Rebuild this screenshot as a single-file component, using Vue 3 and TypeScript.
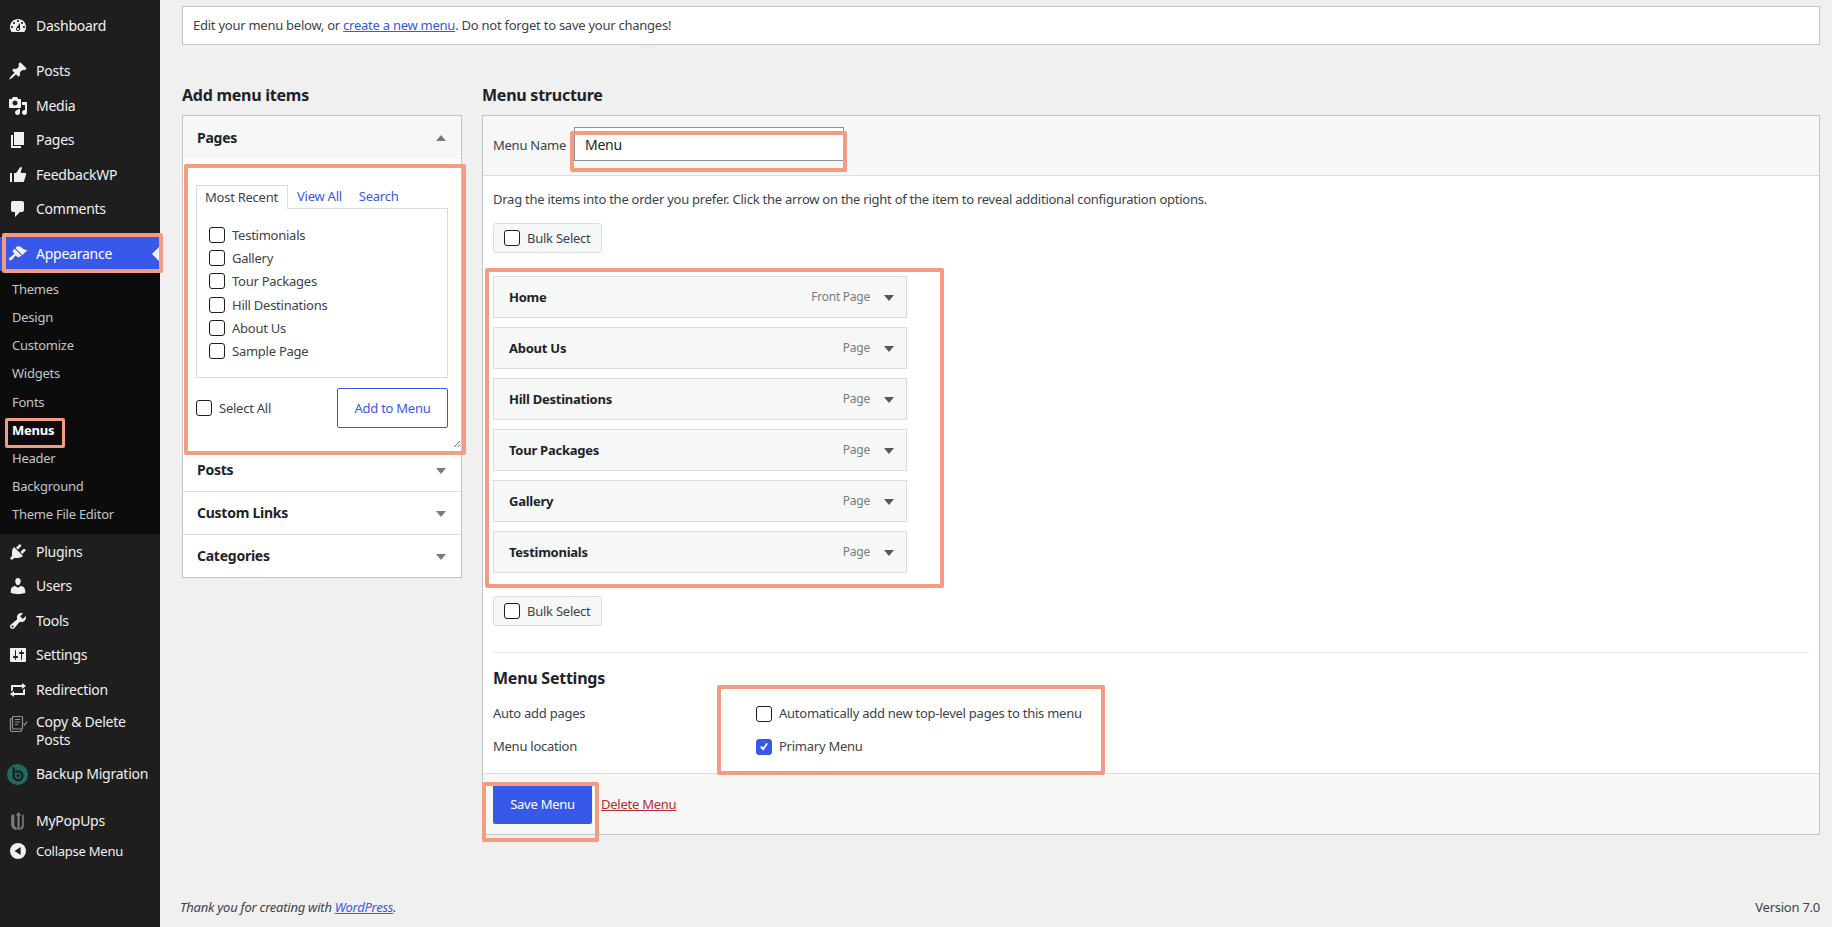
<script setup lang="ts">
interface NavItem { label: string; d?: string; custom?: string; cls?: string }
const top: NavItem[] = [
  { label: 'Posts', d: 'M10.44 3.02l1.82-1.82 6.36 6.35-1.83 1.82c-1.05-.68-2.48-.57-3.41.36l-.75.75c-.92.93-1.04 2.35-.35 3.41l-1.83 1.82-2.41-2.41-2.8 2.79c-.42.42-3.38 2.71-3.8 2.29s1.86-3.39 2.28-3.81l2.79-2.79L4.1 9.36l1.83-1.82c1.05.69 2.48.57 3.4-.36l.75-.75c.93-.92 1.05-2.35.36-3.41z' },
  { label: 'Media', d: 'M13 11V4c0-.55-.45-1-1-1h-1.67L9 1H5L3.67 3H2c-.55 0-1 .45-1 1v7c0 .55.45 1 1 1h10c.55 0 1-.45 1-1zM7 4.5c1.38 0 2.5 1.12 2.5 2.5S8.38 9.5 7 9.5 4.5 8.38 4.5 7 5.62 4.5 7 4.5zM14 6h5v10.5c0 1.38-1.12 2.5-2.5 2.5S14 17.88 14 16.5s1.12-2.5 2.5-2.5c.17 0 .34.02.5.05V9h-3V6zm-4 8.05V13h2v3.5c0 1.38-1.12 2.5-2.5 2.5S7 17.88 7 16.5 8.12 14 9.5 14c.17 0 .34.02.5.05z' },
  { label: 'Pages', d: 'M6 15V2h10v13H6zm-1 1h8v2H3V5h2v11z' },
  { label: 'FeedbackWP', d: 'M12.72 2c.15-.02.26.02.41.07.56.19.83.79.66 1.35-.17.55-1 3.04-1 3.58 0 .53.75 1 1.35 1h3c.6 0 1 .4 1 1s-2 7-2 7c-.17.39-.55 1-1 1H6V8h2.14c.41-.41 3.3-4.71 3.58-5.27.21-.41.6-.68 1-.73zM2 8h2v9H2V8z' },
  { label: 'Comments', d: 'M5 2h9c1.1 0 2 .9 2 2v7c0 1.1-.9 2-2 2h-2l-5 5v-5H5c-1.1 0-2-.9-2-2V4c0-1.1.9-2 2-2z' },
]
const subs = ['Themes', 'Design', 'Customize', 'Widgets', 'Fonts', 'Menus', 'Header', 'Background', 'Theme File Editor']
const lower: NavItem[] = [
  { label: 'Plugins', d: 'M13.11 4.36L9.87 7.6 8 5.73l3.24-3.24c.35-.34 1.05-.2 1.56.32.52.51.66 1.21.31 1.55zm-8 1.77l.91-1.12 9.01 9.01-1.19.84c-.71.71-2.63 1.16-3.82 1.16H6.14L4.9 17.26c-.59.59-1.54.59-2.12 0-.59-.58-.59-1.53 0-2.12l1.24-1.24v-3.88c0-1.13.4-3.19 1.09-3.89zm7.26 3.97l3.24-3.24c.34-.35 1.04-.21 1.55.31.52.51.66 1.21.31 1.55l-3.24 3.25z' },
  { label: 'Users', d: 'M10 9.25c-2.27 0-2.73-3.44-2.73-3.44C7 4.02 7.82 2 9.97 2c2.16 0 2.98 2.02 2.71 3.81 0 0-.41 3.44-2.68 3.44zm0 2.57L12.72 10c2.39 0 4.52 2.33 4.52 4.53v2.49s-3.65 1.13-7.24 1.13c-3.65 0-7.24-1.13-7.24-1.13v-2.49c0-2.25 1.94-4.48 4.47-4.48z' },
  { label: 'Tools', d: 'M16.68 9.77c-1.34 1.34-3.3 1.67-4.95.99l-5.41 6.52c-.99.99-2.59.99-3.58 0s-.99-2.59 0-3.57l6.52-5.42c-.68-1.65-.35-3.61.99-4.95 1.28-1.28 3.12-1.62 4.72-1.06l-2.89 2.89 2.82 2.82 2.86-2.87c.53 1.58.18 3.39-1.08 4.67zM3.81 16.21c.4.39 1.04.39 1.43 0 .4-.4.4-1.04 0-1.43-.39-.4-1.03-.4-1.43 0-.39.39-.39 1.03 0 1.43z' },
  { label: 'Settings', d: 'M18 16V4c0-.55-.45-1-1-1H3c-.55 0-1 .45-1 1v12c0 .55.45 1 1 1h14c.55 0 1-.45 1-1zM8 11h1c.55 0 1 .45 1 1s-.45 1-1 1H8v1.5c0 .28-.22.5-.5.5s-.5-.22-.5-.5V13H6c-.55 0-1-.45-1-1s.45-1 1-1h1V5.5c0-.28.22-.5.5-.5s.5.22.5.5V11zm5-2h-1c-.55 0-1-.45-1-1s.45-1 1-1h1V5.5c0-.28.22-.5.5-.5s.5.22.5.5V7h1c.55 0 1 .45 1 1s-.45 1-1 1h-1v5.5c0 .28-.22.5-.5.5s-.5-.22-.5-.5V9z' },
  { label: 'Redirection', d: 'M5 7v3l-2 1.5V5h11V3l4 3.01L14 9V7H5zm10 6v-3l2-1.5V15H6v2l-4-3.01L6 11v2h9z' },
]
const dash = 'M3.76 16h12.48c1.1-1.37 1.76-3.11 1.76-5 0-4.42-3.58-8-8-8s-8 3.58-8 8c0 1.89.66 3.63 1.76 5zM10 4c.55 0 1 .45 1 1s-.45 1-1 1-1-.45-1-1 .45-1 1-1zM6 6c.55 0 1 .45 1 1s-.45 1-1 1-1-.45-1-1 .45-1 1-1zm8 0c.55 0 1 .45 1 1s-.45 1-1 1-1-.45-1-1 .45-1 1-1zm-5.37 5.55L12 7v6c0 1.1-.9 2-2 2s-2-.9-2-2c0-.57.24-1.08.63-1.45zM4 10c.55 0 1 .45 1 1s-.45 1-1 1-1-.45-1-1 .45-1 1-1zm12 0c.55 0 1 .45 1 1s-.45 1-1 1-1-.45-1-1 .45-1 1-1zm-5 3c0-.55-.45-1-1-1s-1 .45-1 1 .45 1 1 1 1-.45 1-1z'
const brush = 'M14.48 11.06L7.41 3.99l1.5-1.5c.5-.56 2.3-.47 3.51.32 1.21.8 1.43 1.28 2.91 2.1 1.18.64 2.45 1.26 4.45.85zm-.71.71L6.7 4.7 4.93 6.47c-.39.39-.39 1.02 0 1.41l1.06 1.06c.39.39.39 1.03 0 1.42-.6.6-1.43 1.11-2.21 1.69-.35.26-.7.53-1.01.84C1.43 13.23.4 14.84 1.33 15.9c.87 1.11 2.24.08 3.08-.7.3-.31.57-.66.84-1.01.56-.78 1.09-1.61 1.69-2.21.39-.39 1.03-.39 1.42 0l1.06 1.06c.39.39 1.02.39 1.41 0z'
const recent = ['Testimonials', 'Gallery', 'Tour Packages', 'Hill Destinations', 'About Us', 'Sample Page']
const closed = ['Posts', 'Custom Links', 'Categories']
const items = [
  { t: 'Home', k: 'Front Page' }, { t: 'About Us', k: 'Page' }, { t: 'Hill Destinations', k: 'Page' },
  { t: 'Tour Packages', k: 'Page' }, { t: 'Gallery', k: 'Page' }, { t: 'Testimonials', k: 'Page' },
]
</script>

<template>
  <div class="page">
    <aside class="side">
      <div class="nav first"><svg class="ico" viewBox="0 0 20 20"><path :d="dash" /></svg><span>Dashboard</span></div>
      <div class="nav-group">
        <div v-for="n in top" :key="n.label" class="nav"><svg class="ico" viewBox="0 0 20 20"><path :d="n.d" /></svg><span>{{ n.label }}</span></div>
      </div>
      <div class="nav current"><svg class="ico" viewBox="0 0 20 20"><path :d="brush" /></svg><span>Appearance</span><i class="notch"></i></div>
      <div class="subs">
        <div v-for="s in subs" :key="s" class="sub" :class="{ on: s === 'Menus' }">{{ s }}</div>
      </div>
      <div class="nav-group plain">
        <div v-for="n in lower" :key="n.label" class="nav"><svg class="ico" viewBox="0 0 20 20"><path :d="n.d" /></svg><span>{{ n.label }}</span></div>
        <div class="nav tall">
          <svg class="ico" viewBox="0 0 20 20" fill="none"><g class="dim" fill="none" stroke="#8f9193" stroke-width="1.2"><path d="M5 3.5h8.5a1 1 0 0 1 1 1V15a1 1 0 0 1-1 1H5.5a1 1 0 0 1-1-1V4z" /><path d="M4.5 5.5H3.2a.8.8 0 0 0-.8.8v10.5c0 1 .8 1.7 1.7 1.7h8.4a1 1 0 0 0 1-1V16" /><path d="M7 6.5h5M7 9h5M7 11.5h3" /><path d="M15.5 10.5l1.2 1.5 2.3-3.5" /></g></svg>
          <span>Copy &amp; Delete Posts</span>
        </div>
        <div class="nav backup">
          <svg class="ico big" viewBox="0 0 20 20"><circle cx="10" cy="10" r="10" fill="#1f6b62" /><path d="M6.3 3.2v8a4.2 4.2 0 1 0 1.6-3.3" fill="none" stroke="#1e1e1e" stroke-width="2.2" /><circle cx="10.5" cy="11.2" r="1.6" fill="#1e1e1e" /></svg>
          <span>Backup Migration</span>
        </div>
        <div class="nav popups">
          <svg class="ico big" viewBox="0 0 20 20"><path d="M4 3.5h3v9.5c0 1.6 1 2.3 2.2 2.5V18C6 17.7 4 15.9 4 13zM12.8 18c2.4-.5 3.2-2.4 3.2-5V3.5h-1.6V13c0 1.6-.6 2.3-1.6 2.5z" fill="#7c7c7c" /><path d="M10 18V4.2H8.4L11 1l2.6 3.2H12V18z" fill="#7c7c7c" /></svg>
          <span>MyPopUps</span>
        </div>
        <div class="nav collapse">
          <svg class="ico" viewBox="0 0 20 20"><circle cx="10" cy="10" r="8" fill="#f0f0f1" /><path d="M12.6 6v8L6.6 10z" fill="#1e1e1e" /></svg>
          <span>Collapse Menu</span>
        </div>
      </div>
    </aside>

    <main class="main">
      <div class="notice">Edit your menu below, or <a>create a new menu</a>. Do not forget to save your changes!</div>
      <div class="cols">
        <section class="left">
          <h2>Add menu items</h2>
          <div class="acc">
            <div class="acc-head open"><b>Pages</b><i class="tri up"></i></div>
            <div class="acc-body">
              <div class="tabs"><span class="tab active">Most Recent</span><a class="tab">View All</a><a class="tab">Search</a></div>
              <div class="list">
                <label v-for="r in recent" :key="r" class="row"><span class="cb"></span>{{ r }}</label>
              </div>
              <div class="actions">
                <label class="row"><span class="cb"></span>Select All</label>
                <button class="add" type="button">Add to Menu</button>
              </div>
              <svg class="grip" viewBox="0 0 8 8"><path d="M1 7l6-6M4.5 7L7 4.5" stroke="#6f6f6f" fill="none" /></svg>
            </div>
            <div v-for="c in closed" :key="c" class="acc-head shut"><b>{{ c }}</b><i class="tri"></i></div>
          </div>
        </section>

        <section class="right">
          <h2>Menu structure</h2>
          <div class="panel">
            <div class="panel-head">
              <span class="name-label">Menu Name</span>
              <input class="name" value="Menu" />
            </div>
            <div class="panel-body">
              <p class="desc">Drag the items into the order you prefer. Click the arrow on the right of the item to reveal additional configuration options.</p>
              <div class="bulk"><span class="cb"></span>Bulk Select</div>
              <div class="items">
                <div v-for="i in items" :key="i.t" class="item">
                  <b>{{ i.t }}</b><span class="kind">{{ i.k }}</span><i class="tri dark"></i>
                </div>
              </div>
              <div class="bulk"><span class="cb"></span>Bulk Select</div>
              <div class="settings">
                <h3>Menu Settings</h3>
                <div class="set-row"><span class="set-label">Auto add pages</span><label class="row"><span class="cb"></span>Automatically add new top-level pages to this menu</label></div>
                <div class="set-row"><span class="set-label">Menu location</span><label class="row"><span class="cb checked"><svg viewBox="0 0 16 16"><path d="M3.6 8.2l1.6-1.5 1.8 2.2 3.6-5.6 1.8 1.1-5.2 8z" fill="#fff" /></svg></span>Primary Menu</label></div>
              </div>
            </div>
            <div class="panel-foot">
              <button class="save" type="button">Save Menu</button>
              <a class="del">Delete Menu</a>
            </div>
          </div>
        </section>
      </div>
      <footer class="foot"><em>Thank you for creating with <a>WordPress</a>.</em><span>Version 7.0</span></footer>
    </main>

    <div class="mark m-app"></div>
    <div class="mark m-menus"></div>
    <div class="mark m-pages"></div>
    <div class="mark m-name"></div>
    <div class="mark m-items"></div>
    <div class="mark m-set"></div>
    <div class="mark m-save"></div>
  </div>
</template>

<style>
html, body { margin: 0; background: #f0f0f1; }
</style>

<style scoped>
* { box-sizing: border-box; }
.page {
  position: relative; display: flex; width: 1832px; height: 927px; overflow: hidden;
  background: #f0f0f1; color: #3c434a; font: 13px/1.4 "Noto Sans", sans-serif; letter-spacing: -0.25px;
}
.side { width: 160px; flex: none; background: #1e1e1e; color: #f0f0f1; font-size: 14px; padding-top: 9px; }
.nav { display: flex; align-items: center; height: 34.5px; padding-left: 8px; position: relative; }
.nav span { margin-left: 8px; line-height: 18px; }
.first { margin-bottom: 10.5px; }
.nav-group { display: flex; flex-direction: column; }
.ico { width: 20px; height: 20px; fill: #f0f0f1; flex: none; }
.big { width: 21px; height: 21px; margin-left: -1px; }
.current { background: #3858e9; color: #fff; height: 34px; margin-top: 10.5px; }
.notch { position: absolute; right: 0; top: 50%; margin-top: -8px; border: 8px solid transparent; border-right-color: #f0f0f1; border-left: 0; }
.subs { background: #0c0c0c; padding: 4px 0 6px; }
.sub { height: 28.15px; line-height: 28px; padding-left: 12px; font-size: 13px; color: #c3c4c7; }
.sub.on { color: #fff; font-weight: 700; }
.plain { padding-top: 0; }
.tall { height: 49px; align-items: flex-start; padding-top: 6px; }
.backup { height: 37px; margin-top: 0; }
.popups { height: 45px; padding-top: 8px; margin-top: 2px; }
.collapse { height: 30px; font-size: 13px; margin-top: -4px; }

.main { flex: 1; min-width: 0; display: flex; flex-direction: column; padding: 6px 12px 0 22px; }
.notice { height: 39px; line-height: 37px; background: #fff; border: 1px solid #c3c4c7; padding-left: 10px; }
a { color: #3858e9; text-decoration: underline; }
.cols { display: flex; gap: 20px; align-items: flex-start; margin-top: 38px; }
h2 { margin: 0; height: 32px; line-height: 24px; font-size: 16px; font-weight: 700; color: #1d2327; }
.left { width: 280px; flex: none; }
.right { flex: 1; min-width: 0; }

.acc { background: #fff; border: 1px solid #c3c4c7; }
.acc-head { position: relative; display: flex; align-items: center; padding-left: 14px; color: #1d2327; font-size: 14px; }
.acc-head.open { height: 43px; background: #f6f7f7; }
.acc-head.shut { height: 43px; border-top: 1px solid #dcdcde; }
.acc-body + .acc-head { border-top: 0; height: 42px; }
.tri { display: block; width: 0; height: 0; border: 5px solid transparent; border-top: 6px solid #787c82; border-bottom: 0; position: absolute; right: 15px; top: 50%; margin-top: -2px; }
.tri.up { border-top: 0; border-bottom: 6px solid #787c82; margin-top: -3px; }
.acc-body { position: relative; height: 290px; padding: 26px 13px 0; }
.tabs { display: flex; height: 24px; }
.tab { height: 24px; padding: 0 8px; line-height: 23px; text-decoration: none; margin-right: 1px; }
.tab.active { border: 1px solid #dcdcde; border-bottom: 0; background: #fff; position: relative; z-index: 1; width: 92px; padding: 0 8px; }
.list { border: 1px solid #dcdcde; height: 170px; padding: 16px 12px; margin-top: -1px; display: flex; flex-direction: column; gap: 4px; }
.row { display: flex; align-items: center; height: 20px; gap: 7px; white-space: nowrap; }
.cb { width: 16px; height: 16px; flex: none; border: 1px solid #1e1e1e; border-radius: 3px; background: #fff; display: block; }
.cb.checked { background: #3858e9; border-color: #3858e9; }
.cb svg { display: block; width: 14px; height: 14px; }
.actions { display: flex; align-items: center; justify-content: space-between; margin-top: 10px; }
.add { width: 111px; height: 40px; border: 1px solid #3858e9; border-radius: 2px; background: #fff; color: #3858e9; font: inherit; letter-spacing: inherit; padding: 0; }
.grip { position: absolute; right: 0; bottom: 1px; width: 8px; height: 8px; }

.panel { border: 1px solid #c3c4c7; border-bottom-width: 1px; background: #fff; }
.panel-head { height: 60px; background: #f6f7f7; border-bottom: 1px solid #dcdcde; display: flex; align-items: center; padding-left: 10px; }
.name-label { width: 81px; }
.name { width: 270px; height: 34px; margin-top: -3px; padding: 0 10px; border: 1px solid #8c8f94; background: #fff; color: #1e1e1e; font: 14px "Noto Sans", sans-serif; letter-spacing: -0.25px; border-radius: 0; }
.panel-body { padding: 0 10px; }
.desc { margin: 0; height: 47px; line-height: 46px; white-space: nowrap; }
.bulk { display: flex; align-items: center; width: 109px; height: 30px; border: 1px solid #dcdcde; border-radius: 3px; background: #f6f7f7; padding-left: 10px; gap: 7px; }
.items { margin: 23px 0; display: flex; flex-direction: column; gap: 9px; width: 414px; }
.item { position: relative; height: 42px; display: flex; align-items: center; background: #f6f7f7; border: 1px solid #dcdcde; padding-left: 15px; }
.item b { color: #1d2327; }
.kind { margin-left: auto; margin-right: 36px; color: #787c82; font-size: 12px; }
.tri.dark { border-top-color: #50575e; right: 12px; }
.settings { margin-top: 26px; border-top: 1px solid #e8e8ea; padding-top: 13px; height: 121px; }
h3 { margin: 0 0 7px; height: 24px; line-height: 24px; font-size: 16px; font-weight: 700; color: #1d2327; }
.set-row { display: flex; align-items: center; height: 33px; }
.set-label { width: 263px; }
.panel-foot { height: 61px; background: #f6f7f7; border-top: 1px solid #dcdcde; display: flex; align-items: center; padding-left: 10px; gap: 9px; }
.save { width: 99px; height: 40px; border: 0; border-radius: 2px; background: #3858e9; color: #fff; font: inherit; letter-spacing: inherit; padding: 0; }
.del { color: #b32d2e; }
.foot { margin-top: auto; height: 40px; display: flex; align-items: center; justify-content: space-between; margin-left: -2px; }

.mark { position: absolute; border: 4px solid #f59b7f; border-radius: 2px; pointer-events: none; }
.m-app { left: 2px; top: 233px; width: 161px; height: 40px; }
.m-menus { left: 5px; top: 418px; width: 60px; height: 30px; border-width: 3px; }
.m-pages { left: 184px; top: 164px; width: 282px; height: 291px; }
.m-name { left: 570px; top: 131px; width: 277px; height: 41px; }
.m-items { left: 485px; top: 268px; width: 459px; height: 320px; }
.m-set { left: 717px; top: 685px; width: 388px; height: 90px; }
.m-save { left: 482px; top: 782px; width: 117px; height: 60px; }
</style>
